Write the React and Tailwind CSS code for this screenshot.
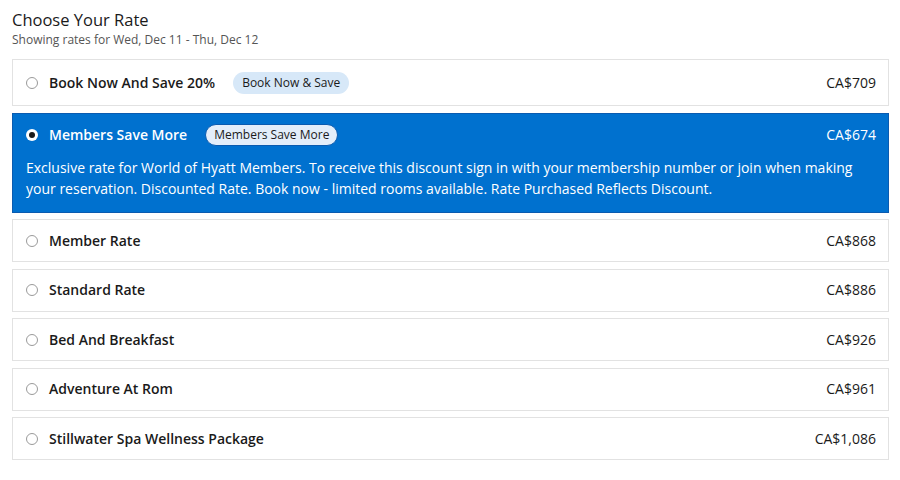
import React from "react";

const rates = [
  { name: "Book Now And Save 20%", badge: "Book Now & Save", price: "CA$709" },
  {
    name: "Members Save More",
    badge: "Members Save More",
    price: "CA$674",
    selected: true,
    desc: "Exclusive rate for World of Hyatt Members. To receive this discount sign in with your membership number or join when making your reservation. Discounted Rate. Book now - limited rooms available. Rate Purchased Reflects Discount.",
  },
  { name: "Member Rate", price: "CA$868" },
  { name: "Standard Rate", price: "CA$886" },
  { name: "Bed And Breakfast", price: "CA$926" },
  { name: "Adventure At Rom", price: "CA$961" },
  { name: "Stillwater Spa Wellness Package", price: "CA$1,086" },
];

function Radio({ checked }) {
  if (checked) {
    return (
      <span className="w-[12px] h-[12px] rounded-full bg-white flex items-center justify-center shrink-0">
        <span className="w-[6px] h-[6px] rounded-full bg-[#1a1a1a]" />
      </span>
    );
  }
  return <span className="w-[12px] h-[12px] rounded-full border border-[#9a9a9a] bg-white shrink-0" />;
}

function Card({ r }) {
  const sel = r.selected;
  let cls;
  if (sel) cls = "bg-[#0071cf] border border-[#0a5bb0] pl-[13px] pr-[12px] pt-[10px] pb-[13px] text-white";
  else if (r.badge) cls = "bg-white border border-[#e2e2e2] pl-[13px] pr-[12px] py-[11.5px] text-[#1a1a1a]";
  else cls = "bg-white border border-[#e2e2e2] pl-[13px] pr-[12px] py-[10.5px] text-[#1a1a1a]";
  return (
    <div className={cls}>
      <div className={"flex items-center " + (r.badge ? "h-[22px]" : "h-[20px]")}>
        <Radio checked={sel} />
        <span className="ml-[11px] text-[14px] font-semibold leading-[20px]">{r.name}</span>
        {r.badge && (
          <span
            className={
              sel
                ? "ml-[18px] h-[22px] px-[8px] rounded-full bg-[#e3eefa] border border-[#0a5bb0] text-[#1a1a1a] text-[12px] leading-[20px] flex items-center"
                : "ml-[18px] h-[22px] px-[9px] rounded-full bg-[#d7e8f8] text-[#1a1a1a] text-[12px] leading-[22px] flex items-center"
            }
          >
            {r.badge}
          </span>
        )}
        <span className={"ml-auto text-[14px] leading-[20px] " + (sel ? "text-white" : "text-[#1a1a1a]")}>{r.price}</span>
      </div>
      {r.desc && <p className="mt-[11px] text-[14px] leading-[21px]">{r.desc}</p>}
    </div>
  );
}

export default function App() {
  return (
    <div className="w-[900px] h-[480px] bg-white px-[12px] pt-[9px]" style={{ fontFamily: '"Open Sans", sans-serif' }}>
      <h1 className="text-[16.5px] leading-[22px] text-[#1a1a1a] font-medium">Choose Your Rate</h1>
      <p className="text-[12px] leading-[17px] text-[#555]">Showing rates for Wed, Dec 11 - Thu, Dec 12</p>
      <div className="mt-[11px] flex flex-col gap-[6.5px] w-[877px]">
        {rates.map((r) => (
          <Card key={r.name} r={r} />
        ))}
      </div>
    </div>
  );
}
